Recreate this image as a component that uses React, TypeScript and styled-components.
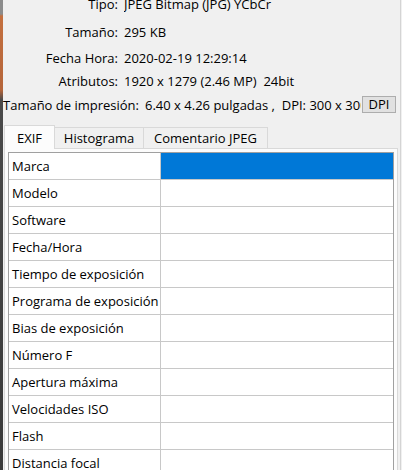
import React from "react";
import styled, { createGlobalStyle } from "styled-components";

const GlobalStyle = createGlobalStyle`
  html, body { margin: 0; padding: 0; }
  body {
    background: #f0f0f0;
    font-family: "Open Sans", "Noto Sans", sans-serif;
    font-size: 13px;
    color: #000;
    overflow: hidden;
  }
`;

const Screen = styled.div`
  display: flex;
  width: 402px;
  height: 470px;
  overflow: hidden;
`;

const EdgeStrip = styled.div`
  flex: 0 0 3px;
  background: linear-gradient(
    to bottom,
    #8c8c8c 0,
    #8c8c8c 14px,
    #c4703f 16px,
    #b5653a 90px,
    #4a4a4a 100px,
    #3a3a3a 100%
  );
`;

const RightEdge = styled.div`
  flex: 0 0 2px;
  box-sizing: border-box;
  border-left: 1px solid #d4d4d4;
  background: #f0f0f0;
`;

const Window = styled.div`
  flex: 1;
  min-width: 0;
  display: flex;
  flex-direction: column;
`;

const InfoList = styled.div`
  display: flex;
  flex-direction: column;
  margin-top: -4px;
`;

const InfoRow = styled.div<{ $gap: number }>`
  display: flex;
  align-items: center;
  gap: 6px;
  margin-top: ${(p) => p.$gap}px;
`;

const Label = styled.div`
  flex: 0 0 115px;
  display: flex;
  justify-content: flex-end;
  white-space: nowrap;
  line-height: 16px;
`;

const Value = styled.div`
  flex: 1;
  min-width: 0;
  overflow: hidden;
  white-space: pre;
  line-height: 16px;
`;

const DpiButton = styled.button`
  flex: 0 0 34px;
  height: 17px;
  margin: 0 4px 0 -5px;
  padding: 0;
  box-sizing: border-box;
  border: 1px solid #adadad;
  background: #e1e1e1;
  font-family: inherit;
  font-size: 13px;
  line-height: 15px;
  color: #000;
`;

const TabStrip = styled.div`
  position: relative;
  z-index: 1;
  display: flex;
  align-items: flex-end;
  height: 23px;
  margin-top: 12px;
  padding-left: 1px;
`;

const Tab = styled.div<{ $w: number; $active?: boolean }>`
  box-sizing: border-box;
  width: ${(p) => p.$w}px;
  height: ${(p) => (p.$active ? 24 : 21)}px;
  margin-bottom: ${(p) => (p.$active ? -1 : 0)}px;
  margin-left: ${(p) => (p.$active ? 0 : -1)}px;
  border: 1px solid #d9d9d9;
  border-bottom: none;
  background: ${(p) => (p.$active ? "#fcfcfc" : "#f0f0f0")};
  display: flex;
  justify-content: center;
  align-items: ${(p) => (p.$active ? "flex-start" : "center")};
  padding-top: ${(p) => (p.$active ? 4 : 0)}px;
  line-height: 16px;
  white-space: nowrap;
`;

const Panel = styled.div`
  flex: 1;
  box-sizing: border-box;
  width: 394px;
  margin-left: 1px;
  padding: 3px;
  border: 1px solid #d9d9d9;
  border-bottom: none;
  background: #fcfcfc;
`;

const Grid = styled.div`
  display: grid;
  grid-template-columns: 152px 1fr;
  border: 1px solid #a0a0a0;
  background: #ffffff;
`;

const Cell = styled.div<{ $label?: boolean; $selected?: boolean }>`
  box-sizing: border-box;
  height: 27px;
  padding-left: 3px;
  border-bottom: 1px solid #c8c8c8;
  border-right: ${(p) => (p.$label ? "1px solid #c8c8c8" : "none")};
  background: ${(p) => (p.$selected ? "#0078d7" : "#ffffff")};
  line-height: 26px;
  white-space: nowrap;
  overflow: hidden;
`;

const info: { label: string; value: string; gap: number }[] = [
  { label: "Tipo:", value: "JPEG Bitmap (JPG) YCbCr", gap: 0 },
  { label: "Tamaño:", value: "295 KB", gap: 12 },
  { label: "Fecha Hora:", value: "2020-02-19 12:29:14", gap: 10 },
  { label: "Atributos:", value: "1920 x 1279 (2.46 MP)  24bit", gap: 7 },
];

const exifRows = [
  "Marca",
  "Modelo",
  "Software",
  "Fecha/Hora",
  "Tiempo de exposición",
  "Programa de exposición",
  "Bias de exposición",
  "Número F",
  "Apertura máxima",
  "Velocidades ISO",
  "Flash",
  "Distancia focal",
];

export default function App() {
  return (
    <>
      <GlobalStyle />
      <Screen>
        <EdgeStrip />
        <Window>
          <InfoList>
            {info.map((r) => (
              <InfoRow key={r.label} $gap={r.gap}>
                <Label>{r.label}</Label>
                <Value>{r.value}</Value>
              </InfoRow>
            ))}
            <InfoRow $gap={7}>
              <Label>Tamaño de impresión:</Label>
              <Value>{"6.40 x 4.26 pulgadas ,  DPI: 300 x 300"}</Value>
              <DpiButton>DPI</DpiButton>
            </InfoRow>
          </InfoList>
          <TabStrip>
            <Tab $w={51} $active>
              EXIF
            </Tab>
            <Tab $w={90}>Histograma</Tab>
            <Tab $w={125}>Comentario JPEG</Tab>
          </TabStrip>
          <Panel>
            <Grid>
              {exifRows.map((name, i) => (
                <React.Fragment key={name}>
                  <Cell $label>{name}</Cell>
                  <Cell $selected={i === 0} />
                </React.Fragment>
              ))}
            </Grid>
          </Panel>
        </Window>
        <RightEdge />
      </Screen>
    </>
  );
}
